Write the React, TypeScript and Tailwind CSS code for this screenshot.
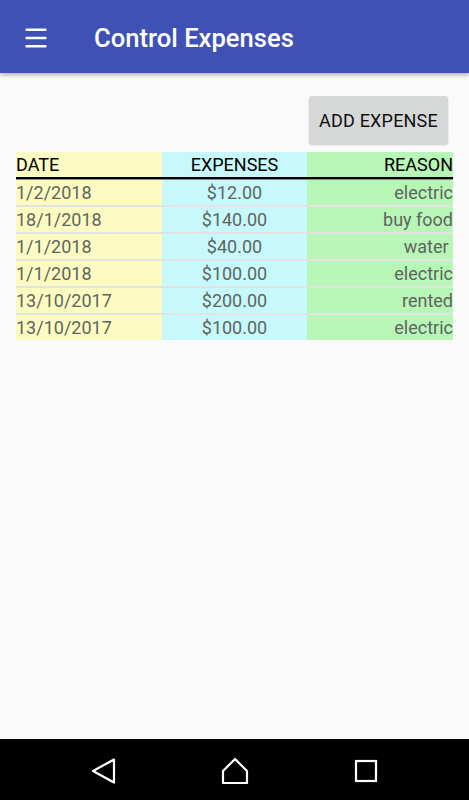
import { Menu } from 'lucide-react';

const expenses = [
  { date: '1/2/2018', amount: '$12.00', reason: 'electric' },
  { date: '18/1/2018', amount: '$140.00', reason: 'buy food' },
  { date: '1/1/2018', amount: '$40.00', reason: 'water\u00a0' },
  { date: '1/1/2018', amount: '$100.00', reason: 'electric' },
  { date: '13/10/2017', amount: '$200.00', reason: 'rented' },
  { date: '13/10/2017', amount: '$100.00', reason: 'electric' },
];

export default function App() {
  return (
    <div className="flex flex-col h-[800px] w-[469px] bg-[#fafafa] font-['Roboto',sans-serif] overflow-hidden">
      {/* App bar */}
      <div className="h-[73px] shrink-0 bg-[#3f51b5] flex items-center shadow-[0_2px_4px_rgba(0,0,0,0.3)] z-10">
        <div className="w-[94px] pl-[22px] flex items-center pt-[2px]">
          <Menu size={28} strokeWidth={2.2} className="text-white" />
        </div>
        <h1 className="text-white text-[25.6px] font-medium pt-[3px]">Control Expenses</h1>
      </div>

      {/* Content */}
      <div className="flex-1 px-4">
        <div className="flex justify-end pt-[23px] pr-[5px]">
          <button className="h-[48px] w-[139px] rounded-[3px] bg-[#d6d7d7] shadow-[0_1px_2px_rgba(0,0,0,0.2)] text-[18px] text-[#111] tracking-[0.2px]">
            ADD EXPENSE
          </button>
        </div>

        <div className="mt-[8px] w-[437px]">
          {/* Header */}
          <div className="grid grid-cols-3 h-[25px] text-[18px] text-black leading-[25px]">
            <div className="bg-[#fcfcc2]">DATE</div>
            <div className="bg-[#c7f9fc] text-center">EXPENSES</div>
            <div className="bg-[#b8f6b7] text-right">REASON</div>
          </div>
          <div className="h-[3px] bg-black border-b border-[#888]" />

          {/* Rows */}
          {expenses.map((e, i) => (
            <div
              key={i}
              className={`grid grid-cols-3 text-[18px] leading-[25px] text-[#5e655e] ${i > 0 ? 'border-t-2 border-[#e2e2e2] h-[27px]' : 'h-[25px]'}`}
            >
              <div className="bg-[#fcfcc2]">{e.date}</div>
              <div className="bg-[#c7f9fc] text-center">{e.amount}</div>
              <div className="bg-[#b8f6b7] text-right">{e.reason}</div>
            </div>
          ))}
        </div>
      </div>

      {/* Nav bar */}
      <div className="h-[61px] shrink-0 bg-black flex items-center justify-center gap-[104px] pt-[3px]">
        <svg width="26" height="26" viewBox="0 0 26 26" fill="none" stroke="white" strokeWidth="2.2" strokeLinejoin="round">
          <path d="M23 1.5 L2 13 L23 24.5 Z" />
        </svg>
        <svg width="28" height="28" viewBox="0 0 28 28" fill="none" stroke="white" strokeWidth="2.2" strokeLinejoin="round">
          <path d="M14 2 L26 14 L26 26 L2 26 L2 14 Z" />
        </svg>
        <svg width="26" height="26" viewBox="0 0 26 26" fill="none" stroke="white" strokeWidth="2.2">
          <rect x="3" y="3" width="20" height="20" />
        </svg>
      </div>
    </div>
  );
}
